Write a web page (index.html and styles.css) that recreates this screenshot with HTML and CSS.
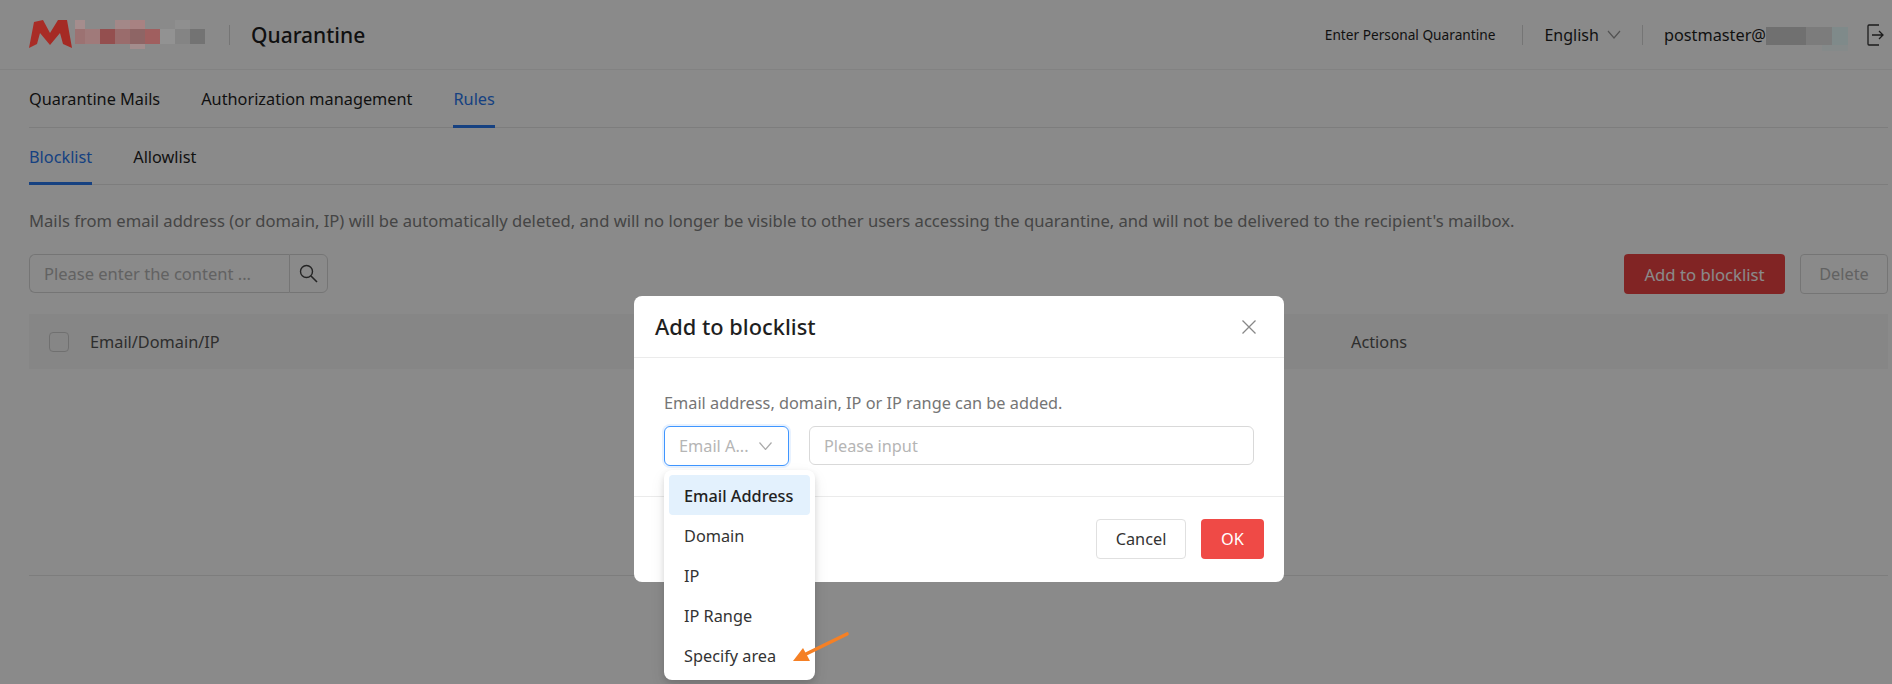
FILE: index.html
```html
<!DOCTYPE html>
<html>
<head>
  <title>Quarantine</title>
  <link rel="stylesheet" href="styles.css">
</head>
<body>
  <div class="header">
    <svg class="logo" width="43" height="29" viewBox="0 0 43 29">
      <path d="M0 28 L5 2 L14 0 L21 13 L21 25 L11 13 L8 24 Z" fill="#a92c26"/>
      <path d="M21 13 L29 0 L38 0 L43 28 L34 24 L31 13 L21 25 Z" fill="#a52a24"/>
    </svg>
    <svg class="mosaic" width="130" height="29" viewBox="0 0 130 29">
      <rect x="0" y="0" width="10" height="9" fill="#a58d8d"/>
      <rect x="40" y="0" width="15" height="9" fill="#a38888"/>
      <rect x="55" y="0" width="15" height="9" fill="#a88282"/>
      <rect x="100" y="0" width="15" height="9" fill="#8f8f8f"/>
      <rect x="0" y="9" width="10" height="15" fill="#9c7272"/>
      <rect x="10" y="9" width="15" height="15" fill="#a07a7a"/>
      <rect x="25" y="9" width="15" height="15" fill="#944f4f"/>
      <rect x="40" y="9" width="15" height="15" fill="#9a6c6c"/>
      <rect x="55" y="9" width="15" height="15" fill="#8e6565"/>
      <rect x="70" y="9" width="15" height="15" fill="#a05f5f"/>
      <rect x="85" y="9" width="15" height="15" fill="#929292"/>
      <rect x="100" y="9" width="15" height="15" fill="#848484"/>
      <rect x="115" y="9" width="15" height="15" fill="#737373"/>
      <rect x="55" y="24" width="15" height="5" fill="#a38d8d"/>
    </svg>
    <div class="header-sep"></div>
    <div class="header-title">Quarantine</div>
    <div class="header-right">
      <a class="personal-link">Enter Personal Quarantine</a>
      <div class="header-sep"></div>
      <div class="lang">
        English
        <svg width="14" height="9" viewBox="0 0 14 9"><path d="M1 1 L7 8 L13 1" fill="none" stroke="#999" stroke-width="1.2"/></svg>
      </div>
      <div class="header-sep"></div>
      <div class="user">postmaster@</div>
      <svg class="mosaic user-mosaic" width="82" height="24" viewBox="0 0 82 24">
        <rect x="0" y="0" width="40" height="18" fill="#707070"/>
        <rect x="40" y="0" width="26" height="18" fill="#7c7c7c"/>
        <rect x="66" y="0" width="16" height="18" fill="#7f8a8a"/>
        <rect x="56" y="18" width="26" height="6" fill="#858a8a"/>
      </svg>
      <svg class="logout" width="17" height="22" viewBox="0 0 17 22">
        <path d="M12 1 H2 Q1 1 1 2 V20 Q1 21 2 21 H12 M5 11 H16 M12 7 L16 11 L12 15" fill="none" stroke="#333" stroke-width="1.3"/>
      </svg>
    </div>
  </div>

  <div class="content">
    <div class="tabs main-tabs">
      <div class="tab">Quarantine Mails</div>
      <div class="tab">Authorization management</div>
      <div class="tab active">Rules</div>
    </div>
    <div class="tabs sub-tabs">
      <div class="tab active">Blocklist</div>
      <div class="tab">Allowlist</div>
    </div>

    <p class="desc">Mails from email address (or domain, IP) will be automatically deleted, and will no longer be visible to other users accessing the quarantine, and will not be delivered to the recipient's mailbox.</p>

    <div class="toolbar">
      <div class="search">
        <input class="search-input" type="text" placeholder="Please enter the content ...">
        <div class="search-btn">
          <svg width="19" height="19" viewBox="0 0 19 19"><circle cx="7.5" cy="7.5" r="6" fill="none" stroke="#444" stroke-width="1.4"/><path d="M12 12 L18 18" stroke="#444" stroke-width="1.6"/></svg>
        </div>
      </div>
      <div class="toolbar-actions">
        <button class="btn btn-primary">Add to blocklist</button>
        <button class="btn btn-disabled">Delete</button>
      </div>
    </div>

    <div class="table">
      <div class="table-head">
        <span class="checkbox"></span>
        <span class="col-email">Email/Domain/IP</span>
        <span class="col-actions">Actions</span>
      </div>
    </div>
  </div>

  <div class="overlay"></div>

  <div class="modal">
    <div class="modal-header">
      <h2>Add to blocklist</h2>
      <svg width="14" height="14" viewBox="0 0 14 14"><path d="M0.5 0.5 L13.5 13.5 M13.5 0.5 L0.5 13.5" stroke="#888" stroke-width="1.3"/></svg>
    </div>
    <div class="modal-body">
      <div class="hint">Email address, domain, IP or IP range can be added.</div>
      <div class="form-row">
        <div class="select">
          <span>Email A...</span>
          <svg width="13" height="8" viewBox="0 0 13 8"><path d="M0.5 0.5 L6.5 7.5 L12.5 0.5" fill="none" stroke="#aaa" stroke-width="1.2"/></svg>
        </div>
        <input class="text-input" type="text" placeholder="Please input">
      </div>
    </div>
    <div class="modal-footer">
      <button class="btn btn-cancel">Cancel</button>
      <button class="btn btn-ok">OK</button>
    </div>
    <div class="dropdown">
      <div class="dropdown-item selected">Email Address</div>
      <div class="dropdown-item">Domain</div>
      <div class="dropdown-item">IP</div>
      <div class="dropdown-item">IP Range</div>
      <div class="dropdown-item">Specify area</div>
    </div>
  </div>

  <svg class="callout" width="60" height="34" viewBox="0 0 60 34">
    <path d="M57 3 L14 24" stroke="#f58025" stroke-width="3.6" stroke-linecap="round"/>
    <path d="M3 30 L13 17 L20 30 Z" fill="#f58025"/>
  </svg>
</body>
</html>
```

FILE: styles.css
```css
* {
  box-sizing: border-box;
}
html, body {
  height: 684px;
  overflow: hidden;
}
body {
  margin: 0;
  background-color: #fff;
  color: #1f1f1f;
  font-family: "Noto Sans", "Open Sans", sans-serif;
  font-size: 16.3px;
}
.header {
  display: flex;
  align-items: center;
  height: 70px;
  padding: 0 8px 0 29px;
  border-bottom: 1px solid #f0f0f0;
}
.logo {
  margin-right: 3px;
  position: relative;
  z-index: 20;
}
.mosaic {
  position: relative;
  z-index: 20;
  flex: none;
}
.header-sep {
  width: 1px;
  height: 20px;
  margin: 0 21px 0 24px;
  background-color: #d9d9d9;
}
.header-title {
  font-size: 21px;
  font-weight: 500;
}
.header-right {
  display: flex;
  align-items: center;
  margin-left: auto;
}
.header-right .header-sep {
  margin: 0 21px;
}
.personal-link {
  margin-right: 6px;
  font-size: 13.7px;
}
.lang {
  display: flex;
  align-items: center;
  gap: 8px;
  font-size: 16px;
}
.user {
  font-size: 16.3px;
}
.user-mosaic {
  margin-top: 8px;
}
.logout {
  margin-left: 19px;
}
.content {
  margin: 0 4px 0 29px;
}
.tabs {
  display: flex;
  gap: 41px;
  border-bottom: 1px solid #e8e8e8;
}
.main-tabs {
  height: 58px;
}
.sub-tabs {
  height: 57px;
}
.tab {
  display: flex;
  align-items: center;
  margin-bottom: -1px;
  padding-top: 3px;
  border-bottom: 3px solid transparent;
}
.tab.active {
  color: #2a78ef;
  border-bottom-color: #2a78ef;
}
.desc {
  margin: 25px 0 0;
  font-size: 16.6px;
  line-height: 22px;
  color: #808080;
}
.toolbar {
  display: flex;
  justify-content: space-between;
  margin-top: 22px;
}
.search {
  display: flex;
  height: 39px;
}
.search-input {
  width: 260px;
  height: 39px;
  padding: 0 14px;
  border: 1px solid #d9d9d9;
  border-right: none;
  border-radius: 6px 0 0 6px;
  outline: none;
  font: inherit;
  font-size: 16.5px;
}
.search-btn {
  display: flex;
  align-items: center;
  justify-content: center;
  width: 39px;
  border: 1px solid #d9d9d9;
  border-radius: 0 6px 6px 0;
}
input::placeholder {
  color: #b5b5b5;
}
.toolbar-actions {
  display: flex;
  gap: 15px;
}
.btn {
  height: 40px;
  padding: 0;
  border-radius: 4px;
  border: 1px solid transparent;
  font: inherit;
}
.btn-primary {
  width: 161px;
  background-color: #ef4444;
  color: #fff;
  font-size: 16.7px;
}
.btn-disabled {
  width: 88px;
  background-color: transparent;
  border-color: #d9d9d9;
  color: #b5b5b5;
}
.table {
  height: 262px;
  margin-top: 20px;
  border-bottom: 1px solid #e8e8e8;
}
.table-head {
  display: flex;
  align-items: center;
  height: 55px;
  padding-left: 20px;
  background-color: #f7f7f7;
  color: #555;
}
.checkbox {
  width: 20px;
  height: 20px;
  border: 1px solid #d0d0d0;
  border-radius: 4px;
}
.col-email {
  margin-left: 21px;
}
.col-actions {
  position: absolute;
  left: 1351px;
}
.overlay {
  position: absolute;
  inset: 0;
  z-index: 10;
  background-color: rgba(0, 0, 0, 0.46);
}
.modal {
  position: absolute;
  left: 634px;
  top: 296px;
  z-index: 30;
  width: 650px;
  height: 286px;
  background-color: #fff;
  border-radius: 8px;
}
.modal-header {
  display: flex;
  align-items: center;
  justify-content: space-between;
  height: 62px;
  padding: 0 28px 0 21px;
  border-bottom: 1px solid #ebebeb;
}
.modal-header h2 {
  margin: 0;
  font-size: 21.8px;
  font-weight: 500;
}
.modal-body {
  height: 139px;
  padding: 34px 30px 0;
  border-bottom: 1px solid #ebebeb;
}
.hint {
  line-height: 22px;
  color: #757575;
}
.form-row {
  display: flex;
  gap: 20px;
  margin-top: 12px;
}
.select {
  display: flex;
  align-items: center;
  justify-content: space-between;
  width: 125px;
  height: 40px;
  padding: 0 16px 0 14px;
  border: 1px solid #4096ff;
  border-radius: 6px;
  box-shadow: 0 0 0 2px rgba(64, 150, 255, 0.12);
  color: #b5b5b5;
}
.text-input {
  width: 445px;
  height: 39px;
  padding: 0 14px;
  border: 1px solid #d9d9d9;
  border-radius: 6px;
  outline: none;
  font: inherit;
}
.modal-footer {
  display: flex;
  justify-content: flex-end;
  gap: 15px;
  padding: 22px 20px 0;
}
.btn-cancel {
  width: 90px;
  background-color: #fff;
  border-color: #e0e0e0;
  color: #333;
}
.btn-ok {
  width: 63px;
  background-color: #ef4a46;
  color: #fff;
}
.dropdown {
  position: absolute;
  left: 30px;
  top: 174px;
  width: 151px;
  padding: 5px;
  background-color: #fff;
  border-radius: 8px;
  box-shadow: 0 6px 16px rgba(0, 0, 0, 0.08), 0 3px 6px rgba(0, 0, 0, 0.12);
}
.dropdown-item {
  display: flex;
  align-items: center;
  height: 40px;
  padding: 2px 0 0 15px;
  border-radius: 4px;
  color: #333;
  white-space: nowrap;
}
.dropdown-item.selected {
  background-color: #e3f1fd;
  font-weight: 500;
  color: #222;
}
.callout {
  position: absolute;
  left: 790px;
  top: 631px;
  z-index: 40;
}
```
